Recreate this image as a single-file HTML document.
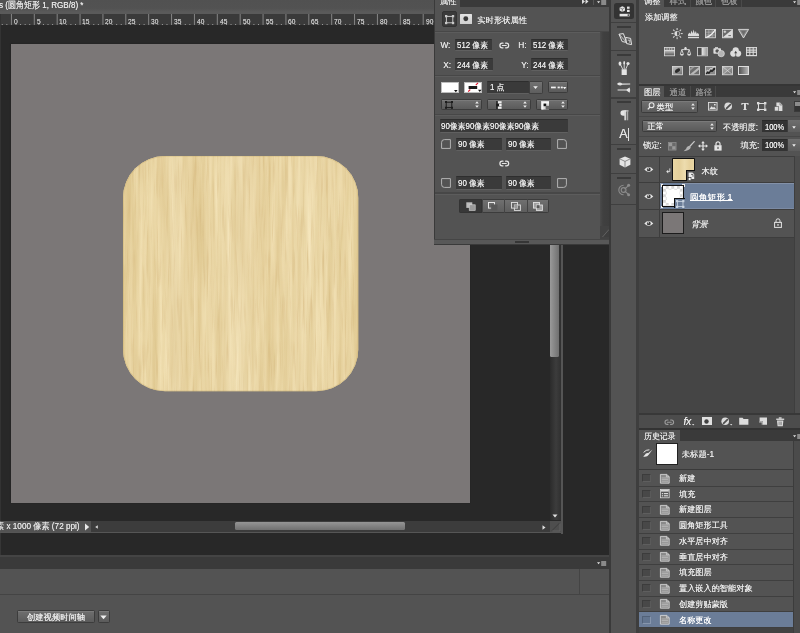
<!DOCTYPE html>
<html lang="zh-CN">
<head>
<meta charset="utf-8">
<title>未标题-1 (圆角矩形 1, RGB/8) *</title>
<style>
*{box-sizing:border-box;margin:0;padding:0}
html,body{width:800px;height:633px;overflow:hidden;background:#282828}
body{position:relative;font-family:"Liberation Sans","WenQuanYi Zen Hei","Noto Sans CJK SC",sans-serif;font-size:8.3px;color:#dedede;line-height:1}
#root{position:absolute;left:0;top:0;width:800px;height:633px;overflow:hidden;will-change:transform}
.a{position:absolute}
.t{position:absolute;white-space:nowrap;line-height:10px;height:10px;text-shadow:0 0 0.5px currentColor}
.fld{position:absolute;background:#3a3a3a;border-top:1px solid #2e2e2e;border-bottom:1px solid #606060;border-radius:1px}
.btn{position:absolute;background:linear-gradient(#6f6f6f,#5b5b5b);border:1px solid #3c3c3c;border-radius:1.5px;box-shadow:inset 0 0.6px 0 #858585}
svg{position:absolute;overflow:visible}
</style>
</head>
<body>
<div id="root">
<!-- document window -->
<div class="a" style="left:0px;top:0px;width:564px;height:13.5px;background:linear-gradient(#515151 0,#525252 60%,#5a5a5a 85%,#5a5a5a 100%)"></div>
<div class="t" style="left:-1px;top:-0.7px;font-size:8.4px;color:#e6e6e6;transform:scale(0.96,1.1);transform-origin:0 0;">s (圆角矩形 1, RGB/8) *</div>
<div class="a" style="left:0px;top:13.5px;width:564px;height:11.4px;background:#3a3a3a"></div>
<svg style="left:0px;top:13.5px;" width="440" height="11.7" viewBox="0 0 440 11.7"><rect x="1.54" y="10.2" width="1" height="1.5" fill="#b5b5b5"/><rect x="6.12" y="10.2" width="1" height="1.5" fill="#b5b5b5"/><rect x="10.70" y="0" width="1" height="11.7" fill="#858585"/><rect x="15.28" y="10.2" width="1" height="1.5" fill="#b5b5b5"/><rect x="19.86" y="10.2" width="1" height="1.5" fill="#b5b5b5"/><rect x="24.44" y="10.2" width="1" height="1.5" fill="#b5b5b5"/><rect x="29.02" y="10.2" width="1" height="1.5" fill="#b5b5b5"/><rect x="33.60" y="0" width="1" height="11.7" fill="#858585"/><rect x="38.18" y="10.2" width="1" height="1.5" fill="#b5b5b5"/><rect x="42.76" y="10.2" width="1" height="1.5" fill="#b5b5b5"/><rect x="47.34" y="10.2" width="1" height="1.5" fill="#b5b5b5"/><rect x="51.92" y="10.2" width="1" height="1.5" fill="#b5b5b5"/><rect x="56.50" y="0" width="1" height="11.7" fill="#858585"/><rect x="61.08" y="10.2" width="1" height="1.5" fill="#b5b5b5"/><rect x="65.66" y="10.2" width="1" height="1.5" fill="#b5b5b5"/><rect x="70.24" y="10.2" width="1" height="1.5" fill="#b5b5b5"/><rect x="74.82" y="10.2" width="1" height="1.5" fill="#b5b5b5"/><rect x="79.40" y="0" width="1" height="11.7" fill="#858585"/><rect x="83.98" y="10.2" width="1" height="1.5" fill="#b5b5b5"/><rect x="88.56" y="10.2" width="1" height="1.5" fill="#b5b5b5"/><rect x="93.14" y="10.2" width="1" height="1.5" fill="#b5b5b5"/><rect x="97.72" y="10.2" width="1" height="1.5" fill="#b5b5b5"/><rect x="102.30" y="0" width="1" height="11.7" fill="#858585"/><rect x="106.88" y="10.2" width="1" height="1.5" fill="#b5b5b5"/><rect x="111.46" y="10.2" width="1" height="1.5" fill="#b5b5b5"/><rect x="116.04" y="10.2" width="1" height="1.5" fill="#b5b5b5"/><rect x="120.62" y="10.2" width="1" height="1.5" fill="#b5b5b5"/><rect x="125.20" y="0" width="1" height="11.7" fill="#858585"/><rect x="129.78" y="10.2" width="1" height="1.5" fill="#b5b5b5"/><rect x="134.36" y="10.2" width="1" height="1.5" fill="#b5b5b5"/><rect x="138.94" y="10.2" width="1" height="1.5" fill="#b5b5b5"/><rect x="143.52" y="10.2" width="1" height="1.5" fill="#b5b5b5"/><rect x="148.10" y="0" width="1" height="11.7" fill="#858585"/><rect x="152.68" y="10.2" width="1" height="1.5" fill="#b5b5b5"/><rect x="157.26" y="10.2" width="1" height="1.5" fill="#b5b5b5"/><rect x="161.84" y="10.2" width="1" height="1.5" fill="#b5b5b5"/><rect x="166.42" y="10.2" width="1" height="1.5" fill="#b5b5b5"/><rect x="171.00" y="0" width="1" height="11.7" fill="#858585"/><rect x="175.58" y="10.2" width="1" height="1.5" fill="#b5b5b5"/><rect x="180.16" y="10.2" width="1" height="1.5" fill="#b5b5b5"/><rect x="184.74" y="10.2" width="1" height="1.5" fill="#b5b5b5"/><rect x="189.32" y="10.2" width="1" height="1.5" fill="#b5b5b5"/><rect x="193.90" y="0" width="1" height="11.7" fill="#858585"/><rect x="198.48" y="10.2" width="1" height="1.5" fill="#b5b5b5"/><rect x="203.06" y="10.2" width="1" height="1.5" fill="#b5b5b5"/><rect x="207.64" y="10.2" width="1" height="1.5" fill="#b5b5b5"/><rect x="212.22" y="10.2" width="1" height="1.5" fill="#b5b5b5"/><rect x="216.80" y="0" width="1" height="11.7" fill="#858585"/><rect x="221.38" y="10.2" width="1" height="1.5" fill="#b5b5b5"/><rect x="225.96" y="10.2" width="1" height="1.5" fill="#b5b5b5"/><rect x="230.54" y="10.2" width="1" height="1.5" fill="#b5b5b5"/><rect x="235.12" y="10.2" width="1" height="1.5" fill="#b5b5b5"/><rect x="239.70" y="0" width="1" height="11.7" fill="#858585"/><rect x="244.28" y="10.2" width="1" height="1.5" fill="#b5b5b5"/><rect x="248.86" y="10.2" width="1" height="1.5" fill="#b5b5b5"/><rect x="253.44" y="10.2" width="1" height="1.5" fill="#b5b5b5"/><rect x="258.02" y="10.2" width="1" height="1.5" fill="#b5b5b5"/><rect x="262.60" y="0" width="1" height="11.7" fill="#858585"/><rect x="267.18" y="10.2" width="1" height="1.5" fill="#b5b5b5"/><rect x="271.76" y="10.2" width="1" height="1.5" fill="#b5b5b5"/><rect x="276.34" y="10.2" width="1" height="1.5" fill="#b5b5b5"/><rect x="280.92" y="10.2" width="1" height="1.5" fill="#b5b5b5"/><rect x="285.50" y="0" width="1" height="11.7" fill="#858585"/><rect x="290.08" y="10.2" width="1" height="1.5" fill="#b5b5b5"/><rect x="294.66" y="10.2" width="1" height="1.5" fill="#b5b5b5"/><rect x="299.24" y="10.2" width="1" height="1.5" fill="#b5b5b5"/><rect x="303.82" y="10.2" width="1" height="1.5" fill="#b5b5b5"/><rect x="308.40" y="0" width="1" height="11.7" fill="#858585"/><rect x="312.98" y="10.2" width="1" height="1.5" fill="#b5b5b5"/><rect x="317.56" y="10.2" width="1" height="1.5" fill="#b5b5b5"/><rect x="322.14" y="10.2" width="1" height="1.5" fill="#b5b5b5"/><rect x="326.72" y="10.2" width="1" height="1.5" fill="#b5b5b5"/><rect x="331.30" y="0" width="1" height="11.7" fill="#858585"/><rect x="335.88" y="10.2" width="1" height="1.5" fill="#b5b5b5"/><rect x="340.46" y="10.2" width="1" height="1.5" fill="#b5b5b5"/><rect x="345.04" y="10.2" width="1" height="1.5" fill="#b5b5b5"/><rect x="349.62" y="10.2" width="1" height="1.5" fill="#b5b5b5"/><rect x="354.20" y="0" width="1" height="11.7" fill="#858585"/><rect x="358.78" y="10.2" width="1" height="1.5" fill="#b5b5b5"/><rect x="363.36" y="10.2" width="1" height="1.5" fill="#b5b5b5"/><rect x="367.94" y="10.2" width="1" height="1.5" fill="#b5b5b5"/><rect x="372.52" y="10.2" width="1" height="1.5" fill="#b5b5b5"/><rect x="377.10" y="0" width="1" height="11.7" fill="#858585"/><rect x="381.68" y="10.2" width="1" height="1.5" fill="#b5b5b5"/><rect x="386.26" y="10.2" width="1" height="1.5" fill="#b5b5b5"/><rect x="390.84" y="10.2" width="1" height="1.5" fill="#b5b5b5"/><rect x="395.42" y="10.2" width="1" height="1.5" fill="#b5b5b5"/><rect x="400.00" y="0" width="1" height="11.7" fill="#858585"/><rect x="404.58" y="10.2" width="1" height="1.5" fill="#b5b5b5"/><rect x="409.16" y="10.2" width="1" height="1.5" fill="#b5b5b5"/><rect x="413.74" y="10.2" width="1" height="1.5" fill="#b5b5b5"/><rect x="418.32" y="10.2" width="1" height="1.5" fill="#b5b5b5"/><rect x="422.90" y="0" width="1" height="11.7" fill="#858585"/><rect x="427.48" y="10.2" width="1" height="1.5" fill="#b5b5b5"/><rect x="432.06" y="10.2" width="1" height="1.5" fill="#b5b5b5"/></svg>
<div class="t" style="left:13.6px;top:17.9px;font-size:7.4px;color:#c8c8c8;transform:scale(0.9,1);transform-origin:0 0;line-height:8px;height:8px;">0</div>
<div class="t" style="left:36.5px;top:17.9px;font-size:7.4px;color:#c8c8c8;transform:scale(0.9,1);transform-origin:0 0;line-height:8px;height:8px;">5</div>
<div class="t" style="left:59.4px;top:17.9px;font-size:7.4px;color:#c8c8c8;transform:scale(0.9,1);transform-origin:0 0;line-height:8px;height:8px;">10</div>
<div class="t" style="left:82.3px;top:17.9px;font-size:7.4px;color:#c8c8c8;transform:scale(0.9,1);transform-origin:0 0;line-height:8px;height:8px;">15</div>
<div class="t" style="left:105.2px;top:17.9px;font-size:7.4px;color:#c8c8c8;transform:scale(0.9,1);transform-origin:0 0;line-height:8px;height:8px;">20</div>
<div class="t" style="left:128.1px;top:17.9px;font-size:7.4px;color:#c8c8c8;transform:scale(0.9,1);transform-origin:0 0;line-height:8px;height:8px;">25</div>
<div class="t" style="left:151.0px;top:17.9px;font-size:7.4px;color:#c8c8c8;transform:scale(0.9,1);transform-origin:0 0;line-height:8px;height:8px;">30</div>
<div class="t" style="left:173.9px;top:17.9px;font-size:7.4px;color:#c8c8c8;transform:scale(0.9,1);transform-origin:0 0;line-height:8px;height:8px;">35</div>
<div class="t" style="left:196.8px;top:17.9px;font-size:7.4px;color:#c8c8c8;transform:scale(0.9,1);transform-origin:0 0;line-height:8px;height:8px;">40</div>
<div class="t" style="left:219.7px;top:17.9px;font-size:7.4px;color:#c8c8c8;transform:scale(0.9,1);transform-origin:0 0;line-height:8px;height:8px;">45</div>
<div class="t" style="left:242.6px;top:17.9px;font-size:7.4px;color:#c8c8c8;transform:scale(0.9,1);transform-origin:0 0;line-height:8px;height:8px;">50</div>
<div class="t" style="left:265.5px;top:17.9px;font-size:7.4px;color:#c8c8c8;transform:scale(0.9,1);transform-origin:0 0;line-height:8px;height:8px;">55</div>
<div class="t" style="left:288.4px;top:17.9px;font-size:7.4px;color:#c8c8c8;transform:scale(0.9,1);transform-origin:0 0;line-height:8px;height:8px;">60</div>
<div class="t" style="left:311.3px;top:17.9px;font-size:7.4px;color:#c8c8c8;transform:scale(0.9,1);transform-origin:0 0;line-height:8px;height:8px;">65</div>
<div class="t" style="left:334.2px;top:17.9px;font-size:7.4px;color:#c8c8c8;transform:scale(0.9,1);transform-origin:0 0;line-height:8px;height:8px;">70</div>
<div class="t" style="left:357.1px;top:17.9px;font-size:7.4px;color:#c8c8c8;transform:scale(0.9,1);transform-origin:0 0;line-height:8px;height:8px;">75</div>
<div class="t" style="left:380.0px;top:17.9px;font-size:7.4px;color:#c8c8c8;transform:scale(0.9,1);transform-origin:0 0;line-height:8px;height:8px;">80</div>
<div class="t" style="left:402.9px;top:17.9px;font-size:7.4px;color:#c8c8c8;transform:scale(0.9,1);transform-origin:0 0;line-height:8px;height:8px;">85</div>
<div class="t" style="left:425.8px;top:17.9px;font-size:7.4px;color:#c8c8c8;transform:scale(0.9,1);transform-origin:0 0;line-height:8px;height:8px;">90</div>
<div class="a" style="left:0px;top:25.2px;width:550px;height:495.3px;background:#282828"></div>
<div class="a" style="left:0px;top:13.5px;width:1.2px;height:507px;background:#333"></div>
<div class="a" style="left:0px;top:532px;width:1.2px;height:23.5px;background:#363636"></div>
<div class="a" style="left:10.9px;top:44.4px;width:459.1px;height:458.3px;background:#7b7777;box-shadow:0 0 1.2px 0.3px #1c1c1c"></div>
<svg style="left:122.7px;top:155.9px" width="235.3" height="235.3" viewBox="0 0 235.3 235.3"><defs><filter id="grain" x="0" y="0" width="100%" height="100%" color-interpolation-filters="sRGB"><feTurbulence type="fractalNoise" baseFrequency="0.2 0.008" numOctaves="3" seed="11" result="n1"/><feColorMatrix in="n1" type="matrix" values="0.12 0 0 0 0.858  0.16 0 0 0 0.762  0.23 0 0 0 0.535  0 0 0 0 1" result="c1"/><feTurbulence type="fractalNoise" baseFrequency="0.035 0.003" numOctaves="2" seed="3" result="n2"/><feColorMatrix in="n2" type="matrix" values="0 0 0 0 0.84  0 0 0 0 0.73  0 0 0 0 0.50  0.7 0 0 0 -0.26" result="c2"/><feTurbulence type="fractalNoise" baseFrequency="0.5 0.022" numOctaves="2" seed="23" result="n3"/><feColorMatrix in="n3" type="matrix" values="0 0 0 0 0.76  0 0 0 0 0.61  0 0 0 0 0.36  0.9 0 0 0 -0.49" result="c3"/><feMerge><feMergeNode in="c1"/><feMergeNode in="c2"/><feMergeNode in="c3"/></feMerge></filter><linearGradient id="wg" x1="0" x2="1" y1="0" y2="0"><stop offset="0" stop-color="#c7a862" stop-opacity="0.30"/><stop offset="0.03" stop-color="#d8bd7c" stop-opacity="0.10"/><stop offset="0.16" stop-color="#e0c78a" stop-opacity="0.06"/><stop offset="0.22" stop-color="#fff6dc" stop-opacity="0.20"/><stop offset="0.30" stop-color="#dcc284" stop-opacity="0.06"/><stop offset="0.50" stop-color="#fff6dc" stop-opacity="0.16"/><stop offset="0.62" stop-color="#d9be80" stop-opacity="0.08"/><stop offset="0.78" stop-color="#fff6dc" stop-opacity="0.08"/><stop offset="0.97" stop-color="#d8bd7c" stop-opacity="0.08"/><stop offset="1" stop-color="#c7a862" stop-opacity="0.25"/></linearGradient><clipPath id="wc"><rect x="0" y="0" width="235.3" height="235.3" rx="42" ry="42"/></clipPath></defs><g clip-path="url(#wc)"><rect x="0" y="0" width="235.3" height="235.3" fill="#e9d6a5"/><rect x="0" y="0" width="235.3" height="235.3" filter="url(#grain)"/><rect x="0" y="0" width="235.3" height="235.3" fill="url(#wg)"/></g><rect x="0.4" y="0.4" width="234.5" height="234.5" rx="41.7" ry="41.7" fill="none" stroke="#b89a55" stroke-opacity="0.3" stroke-width="0.8"/></svg>
<div class="a" style="left:549.5px;top:25.2px;width:11.5px;height:495.3px;background:linear-gradient(90deg,#2b2b2b,#3c3c3c 55%,#303030)"></div>
<div class="a" style="left:550.2px;top:40px;width:9.1px;height:317px;border-radius:1.5px;background:linear-gradient(90deg,#9a9a9a,#707070)"></div>
<svg style="left:552px;top:513.5px;" width="6" height="4" viewBox="0 0 6 4"><path d="M0.5 0.5h5l-2.5 3z" fill="#e0e0e0"/></svg>
<div class="a" style="left:561px;top:13.5px;width:1.9px;height:520.3px;background:#555"></div>
<div class="a" style="left:0px;top:520.5px;width:561px;height:11.8px;background:#3c3c3c"></div>
<div class="a" style="left:0px;top:520.5px;width:90.5px;height:11.8px;background:#535353"></div>
<div class="t" style="left:-3.8px;top:520.5px;font-size:8.3px;color:#e0e0e0;transform:scale(0.985,1.05);transform-origin:0 0;">素 x 1000 像素 (72 ppi)</div>
<svg style="left:83.5px;top:522.8px;" width="6" height="8" viewBox="0 0 6 8"><path d="M1 0.5v7l4.2-3.5z" fill="#e8e8e8"/></svg>
<svg style="left:94.5px;top:524.5px;" width="3" height="4" viewBox="0 0 3 4"><path d="M2.8 0.2v3.6l-2.6-1.8z" fill="#d8d8d8"/></svg>
<svg style="left:541.5px;top:524.5px;" width="4" height="5" viewBox="0 0 4 5"><path d="M0.5 0.2v4.6l3-2.3z" fill="#e0e0e0"/></svg>
<div class="a" style="left:234.8px;top:521.5px;width:170px;height:8.8px;border-radius:1.5px;background:linear-gradient(#959595,#707070)"></div>
<div class="a" style="left:549.5px;top:521px;width:11px;height:11px;background:#4e4e4e"></div>
<svg style="left:549.5px;top:521px;" width="11" height="11" viewBox="0 0 11 11"><path d="M2 9.6L9.6 2" stroke="#3a3a3a" stroke-width="0.9"/><path d="M2.4 10H10V2.4" stroke="#6a6a6a" stroke-width="0.7" fill="none"/></svg>
<div class="a" style="left:0px;top:532px;width:562.9px;height:1.4px;background:#565656"></div>
<!-- timeline panel -->
<div class="a" style="left:0px;top:555.5px;width:609.4px;height:77.5px;background:#535353"></div>
<div class="a" style="left:0px;top:555.3px;width:609.4px;height:12.4px;background:linear-gradient(#444 0,#444 16%,#3a3a3a 17%,#3a3a3a 100%)"></div>
<div class="a" style="left:0px;top:567.5px;width:610px;height:1px;background:#3a3a3a"></div>
<div class="a" style="left:0px;top:594px;width:610px;height:1px;background:#444"></div>
<div class="a" style="left:579px;top:568.5px;width:1px;height:25.5px;background:#444"></div>
<svg style="left:597px;top:561px;" width="9.2" height="5" viewBox="0 0 9.2 5"><path d="M0 1.2h3.2l-1.6 2z" fill="#e0e0e0"/><rect x="4.2" y="0" width="5" height="5" fill="#8a8a8a"/></svg>
<div class="btn" style="left:17.1px;top:610.3px;width:78.3px;height:12.6px;"></div>
<div class="t" style="left:27px;top:612px;font-size:8.3px;color:#ececec;">创建视频时间轴</div>
<div class="btn" style="left:97.5px;top:610.3px;width:12.2px;height:12.6px;"></div>
<svg style="left:100.2px;top:614.5px;" width="7" height="5" viewBox="0 0 7 5"><path d="M0.3 0.5h6.4l-3.2 3.8z" fill="#f0f0f0"/></svg>
<!-- properties panel -->
<div class="a" style="left:433.5px;top:0px;width:176.5px;height:244.5px;background:#535353"></div>
<div class="a" style="left:433.5px;top:0px;width:1.2px;height:244.5px;background:#3a3a3a"></div>
<div class="a" style="left:433.5px;top:239.4px;width:176.5px;height:5.4px;background:#585858;border-top:1px solid #454545;border-bottom:0.8px solid #3a3a3a"></div>
<div class="a" style="left:514.6px;top:241.2px;width:14.4px;height:1.9px;background:#363636"></div>
<div class="a" style="left:460px;top:0px;width:150px;height:6.8px;background:#3a3a3a"></div>
<div class="t" style="left:440px;top:-3.6px;font-size:8.3px;color:#e6e6e6;">属性</div>
<svg style="left:582px;top:0px;" width="7" height="5" viewBox="0 0 7 5"><path d="M0 -1l3 2.5l-3 2.5zM3.5 -1l3 2.5l-3 2.5z" fill="#ddd"/></svg>
<div class="a" style="left:593px;top:0px;width:1px;height:5px;background:#555"></div>
<svg style="left:597px;top:0px;" width="9.2" height="5" viewBox="0 0 9.2 5"><path d="M0 1.2h3.2l-1.6 2z" fill="#e0e0e0"/><rect x="4.2" y="0" width="5" height="5" fill="#8a8a8a"/></svg>
<div class="a" style="left:599.6px;top:31.8px;width:10.4px;height:207.6px;background:#424242"></div>
<div class="a" style="left:599.6px;top:31.8px;width:10.4px;height:194px;background:linear-gradient(90deg,#4b4b4b,#404040 30%,#3d3d3d)"></div>
<svg style="left:602px;top:229px;" width="7" height="8" viewBox="0 0 7 8"><path d="M7 1L1 8h6z" fill="#3e3e3e"/><path d="M7 0.5L0.5 8" stroke="#6a6a6a" stroke-width="0.8"/></svg>
<div class="a" style="left:441.8px;top:11.3px;width:15.3px;height:15.8px;background:#3a3a3a;border-radius:2px;border:1px solid #333"></div>
<svg style="left:444.9px;top:14.8px;" width="9.2" height="9.2" viewBox="0 0 9.2 9.2"><rect x="1.4" y="1.4" width="6.4" height="6.4" fill="none" stroke="#c8c8c8" stroke-width="1"/><rect x="0" y="0" width="2.3" height="2.3" fill="#c8c8c8"/><rect x="6.9" y="0" width="2.3" height="2.3" fill="#c8c8c8"/><rect x="0" y="6.9" width="2.3" height="2.3" fill="#c8c8c8"/><rect x="6.9" y="6.9" width="2.3" height="2.3" fill="#c8c8c8"/></svg>
<div class="a" style="left:459.8px;top:13.8px;width:12.2px;height:10px;background:linear-gradient(#e4e4e4,#cfcfcf);border-radius:0.5px"></div>
<svg style="left:463px;top:16px;" width="6" height="6" viewBox="0 0 6 6"><circle cx="2.8" cy="2.8" r="2.45" fill="#3a3a3a"/></svg>
<div class="t" style="left:477.3px;top:15.2px;font-size:8.3px;color:#e6e6e6;">实时形状属性</div>
<div class="a" style="left:434.5px;top:30.599999999999998px;width:165px;height:1.2px;background:#474747"></div>
<div class="a" style="left:434.5px;top:31.8px;width:165px;height:0.8px;background:#5c5c5c"></div>
<div class="a" style="left:434.5px;top:30.6px;width:175.5px;height:1.2px;background:#474747"></div>
<div class="t" style="left:440.4px;top:40.2px;font-size:8.3px;color:#e2e2e2;">W:</div>
<div class="fld" style="left:455px;top:38.8px;width:37.3px;height:12.6px;"></div>
<div class="t" style="left:457.0px;top:40.39999999999999px;font-size:8.3px;color:#e8e8e8;transform:scale(0.95,1);transform-origin:0 0;">512 像素</div>
<div class="t" style="left:518.2px;top:40.2px;font-size:8.3px;color:#e2e2e2;">H:</div>
<div class="fld" style="left:530.6px;top:38.8px;width:37.2px;height:12.6px;"></div>
<div class="t" style="left:532.6px;top:40.39999999999999px;font-size:8.3px;color:#e8e8e8;transform:scale(0.95,1);transform-origin:0 0;">512 像素</div>
<div class="t" style="left:443.3px;top:60px;font-size:8.3px;color:#e2e2e2;">X:</div>
<div class="fld" style="left:455px;top:58.2px;width:37.5px;height:13.2px;"></div>
<div class="t" style="left:457.0px;top:60.1px;font-size:8.3px;color:#e8e8e8;transform:scale(0.95,1);transform-origin:0 0;">244 像素</div>
<div class="t" style="left:521.3px;top:60px;font-size:8.3px;color:#e2e2e2;">Y:</div>
<div class="fld" style="left:530.6px;top:58.2px;width:37.2px;height:13.2px;"></div>
<div class="t" style="left:532.6px;top:60.1px;font-size:8.3px;color:#e8e8e8;transform:scale(0.95,1);transform-origin:0 0;">244 像素</div>
<svg style="left:498.8px;top:41.6px;" width="10.6" height="7" viewBox="0 0 10.6 7"><path d="M4 1.2H3.2a2.3 2.3 0 0 0 0 4.6H4M6.6 1.2h0.8a2.3 2.3 0 0 1 0 4.6H6.6M3.4 3.5h3.8" fill="none" stroke="#e6e6e6" stroke-width="1.25" stroke-linecap="round"/></svg>
<div class="a" style="left:434.5px;top:75.0px;width:165px;height:1.2px;background:#474747"></div>
<div class="a" style="left:434.5px;top:76.19999999999999px;width:165px;height:0.8px;background:#5c5c5c"></div>
<div class="a" style="left:440.6px;top:82px;width:18px;height:10.8px;background:#fff;border:0.6px solid #bdbdbd"></div>
<svg style="left:454px;top:89.5px;" width="4" height="3" viewBox="0 0 4 3"><path d="M0 0h3.6l-1.8 2.2z" fill="#111"/></svg>
<div class="a" style="left:463.8px;top:82px;width:18.2px;height:10.8px;background:#fff;border:0.6px solid #bdbdbd"></div>
<svg style="left:463.8px;top:82px;" width="18.2" height="10.8" viewBox="0 0 18.2 10.8"><rect x="4.6" y="4" width="8.6" height="3" fill="#1a1a1a"/><path d="M11.8 3.2L14 0.9M4.2 9.6L6.3 7.5" stroke="#e0142a" stroke-width="1.1"/><path d="M14 7.8h3.6l-1.8 2.2z" fill="#111"/></svg>
<div class="fld" style="left:487px;top:80.6px;width:42px;height:13px;"></div>
<div class="t" style="left:489.59999999999997px;top:82.39999999999999px;font-size:8.3px;color:#e8e8e8;transform:scale(0.95,1);transform-origin:0 0;">1 点</div>
<div class="a" style="left:528.8px;top:80.6px;width:13.8px;height:13px;background:linear-gradient(#727272,#5e5e5e);border:1px solid #3f3f3f;border-radius:0 1.5px 1.5px 0"></div>
<svg style="left:533.2px;top:86.2px;" width="5" height="3.5" viewBox="0 0 5 3.5"><path d="M0.2 0.3h4.6l-2.3 2.8z" fill="#eee"/></svg>
<div class="btn" style="left:547.5px;top:81.2px;width:20.5px;height:11.8px;"></div>
<svg style="left:550.5px;top:86.2px;" width="16" height="5" viewBox="0 0 16 5"><rect x="0" y="0.6" width="4.8" height="1.7" fill="#f2f2f2"/><rect x="6.6" y="0.6" width="2.2" height="1.7" fill="#f2f2f2"/><rect x="9.8" y="0.6" width="2" height="1.7" fill="#f2f2f2"/><path d="M12 1h3.4l-1.7 2.2z" fill="#f2f2f2"/></svg>
<div class="btn" style="left:440.6px;top:98.8px;width:41.4px;height:11.6px;"></div>
<svg style="left:474.8px;top:101.1px;" width="4" height="7" viewBox="0 0 4 7"><path d="M0.2 2.6h3.6l-1.8-2.3zM0.2 4.4h3.6l-1.8 2.3z" fill="#ececec"/></svg>
<div class="btn" style="left:487px;top:98.8px;width:43.6px;height:11.6px;"></div>
<svg style="left:523.4px;top:101.1px;" width="4" height="7" viewBox="0 0 4 7"><path d="M0.2 2.6h3.6l-1.8-2.3zM0.2 4.4h3.6l-1.8 2.3z" fill="#ececec"/></svg>
<div class="btn" style="left:535.6px;top:98.8px;width:32.4px;height:11.6px;"></div>
<svg style="left:560.8px;top:101.1px;" width="4" height="7" viewBox="0 0 4 7"><path d="M0.2 2.6h3.6l-1.8-2.3zM0.2 4.4h3.6l-1.8 2.3z" fill="#ececec"/></svg>
<svg style="left:445.2px;top:101px;" width="8" height="7.8" viewBox="0 0 8 7.8"><rect x="1.2" y="1.2" width="5.6" height="5.4" fill="none" stroke="#1c1c1c" stroke-width="1"/><rect x="0" y="0" width="2" height="2" fill="#1c1c1c"/><rect x="6" y="0" width="2" height="2" fill="#1c1c1c"/><rect x="0" y="5.8" width="2" height="2" fill="#1c1c1c"/><rect x="6" y="5.8" width="2" height="2" fill="#1c1c1c"/></svg>
<svg style="left:495.6px;top:100.8px;" width="6" height="9" viewBox="0 0 6 9"><rect x="1.8" y="0.2" width="3.8" height="2.2" fill="#f0f0f0"/><rect x="1.8" y="2.9" width="3.8" height="2.2" fill="#f0f0f0"/><rect x="1.8" y="5.6" width="3.8" height="2.2" fill="#f0f0f0"/><rect x="0.3" y="0" width="1.3" height="8" fill="#1a1a1a"/><rect x="0.3" y="2.8" width="2.8" height="2.4" fill="#1a1a1a"/></svg>
<svg style="left:541.4px;top:100.8px;" width="8" height="9" viewBox="0 0 8 9"><rect x="0" y="0" width="8" height="8.6" fill="#d8d8d8"/><path d="M1.6 8.6V1.6H8" fill="none" stroke="#f6f6f6" stroke-width="1.6"/><rect x="2.6" y="2.6" width="2.6" height="2.6" fill="#111"/><rect x="4.6" y="4.8" width="3.4" height="3.8" fill="#666"/></svg>
<div class="a" style="left:434.5px;top:113.80000000000001px;width:165px;height:1.2px;background:#474747"></div>
<div class="a" style="left:434.5px;top:115.0px;width:165px;height:0.8px;background:#5c5c5c"></div>
<div class="fld" style="left:440px;top:119.4px;width:128px;height:13.2px;"></div>
<div class="t" style="left:441.0px;top:121.3px;font-size:8.3px;color:#e8e8e8;transform:scale(0.95,1);transform-origin:0 0;">90像素90像素90像素90像素</div>
<svg style="left:441px;top:138.8px;" width="10" height="10" viewBox="0 0 10 10"><path d="M0.6 9.4V3.4A2.8 2.8 0 0 1 3.4 0.6H9.4V9.4Z" fill="none" stroke="#bdbdbd" stroke-width="0.9"/></svg>
<svg style="left:556.6px;top:138.8px;" width="10" height="10" viewBox="0 0 10 10"><path d="M0.6 9.4V0.6H6.6A2.8 2.8 0 0 1 9.4 3.4V9.4Z" fill="none" stroke="#bdbdbd" stroke-width="0.9"/></svg>
<div class="fld" style="left:456px;top:137.5px;width:46px;height:13.2px;"></div>
<div class="t" style="left:458.0px;top:139.4px;font-size:8.3px;color:#e8e8e8;transform:scale(0.95,1);transform-origin:0 0;">90 像素</div>
<div class="fld" style="left:506.2px;top:137.5px;width:45px;height:13.2px;"></div>
<div class="t" style="left:508.2px;top:139.4px;font-size:8.3px;color:#e8e8e8;transform:scale(0.95,1);transform-origin:0 0;">90 像素</div>
<svg style="left:498.8px;top:159.6px;" width="10.6" height="7" viewBox="0 0 10.6 7"><path d="M4 1.2H3.2a2.3 2.3 0 0 0 0 4.6H4M6.6 1.2h0.8a2.3 2.3 0 0 1 0 4.6H6.6M3.4 3.5h3.8" fill="none" stroke="#e6e6e6" stroke-width="1.25" stroke-linecap="round"/></svg>
<svg style="left:441px;top:178px;" width="10" height="10" viewBox="0 0 10 10"><path d="M0.6 0.6V6.6A2.8 2.8 0 0 0 3.4 9.4H9.4V0.6Z" fill="none" stroke="#bdbdbd" stroke-width="0.9"/></svg>
<svg style="left:556.6px;top:178px;" width="10" height="10" viewBox="0 0 10 10"><path d="M0.6 0.6H9.4V6.6A2.8 2.8 0 0 1 6.6 9.4H0.6Z" fill="none" stroke="#bdbdbd" stroke-width="0.9"/></svg>
<div class="fld" style="left:456px;top:176.4px;width:46px;height:13.4px;"></div>
<div class="t" style="left:458.0px;top:178.4px;font-size:8.3px;color:#e8e8e8;transform:scale(0.95,1);transform-origin:0 0;">90 像素</div>
<div class="fld" style="left:506.2px;top:176.4px;width:45px;height:13.4px;"></div>
<div class="t" style="left:508.2px;top:178.4px;font-size:8.3px;color:#e8e8e8;transform:scale(0.95,1);transform-origin:0 0;">90 像素</div>
<div class="a" style="left:434.5px;top:192.4px;width:165px;height:1.2px;background:#474747"></div>
<div class="a" style="left:434.5px;top:193.6px;width:165px;height:0.8px;background:#5c5c5c"></div>
<div class="a" style="left:458.6px;top:198.5px;width:90.8px;height:14.9px;background:linear-gradient(#707070,#5d5d5d);border:1px solid #3c3c3c;border-radius:1.5px"></div>
<div class="a" style="left:458.6px;top:198.5px;width:23.2px;height:14.9px;background:#383838;border:1px solid #333;border-radius:1.5px 0 0 1.5px"></div>
<div class="a" style="left:481.8px;top:199.4px;width:1px;height:13.2px;background:#444"></div>
<div class="a" style="left:504.4px;top:199.4px;width:1px;height:13.2px;background:#444"></div>
<div class="a" style="left:527px;top:199.4px;width:1px;height:13.2px;background:#444"></div>
<svg style="left:465.6px;top:201.8px;" width="10" height="9" viewBox="0 0 10 9"><rect x="0.3" y="0.3" width="6" height="5.6" fill="#bdbdbd"/><rect x="3.2" y="2.8" width="6" height="5.6" fill="#9a9a9a" stroke="#d6d6d6" stroke-width="0.6"/></svg>
<svg style="left:488.2px;top:201.8px;" width="10" height="9" viewBox="0 0 10 9"><rect x="0.5" y="0.5" width="6" height="5.6" fill="none" stroke="#e6e6e6" stroke-width="1"/><rect x="3.2" y="2.8" width="6" height="5.6" fill="#585858" stroke="#5c5c5c" stroke-width="0.6"/></svg>
<svg style="left:510.8px;top:201.8px;" width="10" height="9" viewBox="0 0 10 9"><rect x="0.5" y="0.5" width="6" height="5.6" fill="none" stroke="#e0e0e0" stroke-width="0.9"/><rect x="3.4" y="3" width="6" height="5.4" fill="none" stroke="#e0e0e0" stroke-width="0.9"/><rect x="3.4" y="3" width="3.1" height="3.1" fill="#9a9a9a"/></svg>
<svg style="left:533.3px;top:201.8px;" width="10" height="9" viewBox="0 0 10 9"><rect x="0.5" y="0.5" width="6" height="5.6" fill="#a0a0a0" stroke="#e0e0e0" stroke-width="0.9"/><rect x="3.4" y="3" width="6" height="5.4" fill="#a0a0a0" stroke="#e0e0e0" stroke-width="0.9"/><rect x="3.6" y="3.2" width="2.8" height="2.8" fill="#585858"/></svg>
<!-- icon dock -->
<div class="a" style="left:610.8px;top:0px;width:25.5px;height:633px;background:#535353"></div>
<div class="a" style="left:609.4px;top:0px;width:1.5px;height:633px;background:#3a3a3a"></div>
<div class="a" style="left:636.2px;top:0px;width:2.6px;height:633px;background:#3e3e3e"></div>
<div class="a" style="left:613.8px;top:2.6px;width:20.4px;height:16.6px;background:#333;border-radius:2.5px"></div>
<div class="a" style="left:611.3px;top:21.599999999999998px;width:25px;height:1.3px;background:#3f3f3f"></div>
<div class="a" style="left:617.2px;top:25.5px;width:13.4px;height:2.1px;background:#3a3a3a"></div>
<div class="a" style="left:611.3px;top:49.6px;width:25px;height:1.3px;background:#3f3f3f"></div>
<div class="a" style="left:617.2px;top:53.5px;width:13.4px;height:2.1px;background:#3a3a3a"></div>
<div class="a" style="left:611.3px;top:97.4px;width:25px;height:1.3px;background:#3f3f3f"></div>
<div class="a" style="left:617.2px;top:101.1px;width:13.4px;height:2.1px;background:#3a3a3a"></div>
<div class="a" style="left:611.3px;top:144.0px;width:25px;height:1.3px;background:#3f3f3f"></div>
<div class="a" style="left:617.2px;top:148.1px;width:13.4px;height:2.1px;background:#3a3a3a"></div>
<div class="a" style="left:611.3px;top:172.8px;width:25px;height:1.3px;background:#3f3f3f"></div>
<div class="a" style="left:617.2px;top:176.7px;width:13.4px;height:2.1px;background:#3a3a3a"></div>
<div class="a" style="left:611.3px;top:204.20000000000002px;width:25px;height:1.3px;background:#3f3f3f"></div>
<svg style="left:618.5px;top:5.5px;" width="12" height="11" viewBox="0 0 12 11"><path d="M3.3 0.3L6 1.6V4.6L3.3 6L0.6 4.6V1.6Z" fill="#e4e4e4"/><path d="M0.6 1.6L3.3 3L6 1.6M3.3 3V6" stroke="#333" stroke-width="0.5" fill="none"/><rect x="8" y="0.6" width="2.6" height="2.2" fill="#e4e4e4"/><rect x="8" y="3.8" width="2.6" height="2.2" fill="#e4e4e4"/><rect x="0.6" y="7.8" width="10" height="2.6" fill="#e4e4e4"/><rect x="8.6" y="8.4" width="1.4" height="1.4" fill="#333"/></svg>
<svg style="left:617.5px;top:33px;" width="15" height="14" viewBox="0 0 15 14"><path d="M1 1.2L5.4 0.6L8.6 9.4L4.2 8.6Z" fill="none" stroke="#e4e4e4" stroke-width="1"/><path d="M1 1.2L8.6 9.4" stroke="#e4e4e4" stroke-width="0.8"/><path d="M7.6 4.4L12.6 5.4L13.6 11.6L8.6 10.6Z" fill="#535353" stroke="#e4e4e4" stroke-width="1"/><path d="M9.8 7.2h2v2.6" stroke="#e4e4e4" stroke-width="0.8" fill="none"/></svg>
<svg style="left:618px;top:60.6px;" width="12" height="15" viewBox="0 0 12 15"><rect x="3.6" y="8.2" width="5.2" height="5.8" fill="#e4e4e4"/><path d="M4.6 8L2.4 3.4M6.2 8V2M7.8 8L9.8 3.4" stroke="#e4e4e4" stroke-width="0.9"/><ellipse cx="2" cy="2.6" rx="1.4" ry="2.2" fill="#e4e4e4"/><ellipse cx="6.2" cy="1.8" rx="0.9" ry="1.8" fill="#e4e4e4"/><ellipse cx="10" cy="2.6" rx="1.6" ry="1.5" fill="#e4e4e4"/></svg>
<svg style="left:617.4px;top:81.5px;" width="14" height="12" viewBox="0 0 14 12"><path d="M0.4 1.2Q3 -0.4 5.2 1.6L13.2 1.6V2.6L5.2 2.8Q3 4.2 0.4 2.4Z" fill="#e4e4e4"/><path d="M0.6 7.4H9.4L12.6 5.6Q13.8 8 12.6 10.8L9.4 8.6H0.6Z" fill="#e4e4e4"/></svg>
<svg style="left:619.8px;top:109.7px;" width="9" height="10.4" viewBox="0 0 9 10.4"><path d="M4.6 0.3H8.4V1.5H4.6Z" fill="#e4e4e4"/><path d="M4.8 0.3V5.8H3.2A2.75 2.75 0 0 1 3.2 0.3Z" fill="#e4e4e4"/><rect x="4.4" y="0.3" width="1.5" height="10" fill="#e4e4e4"/><rect x="6.6" y="0.3" width="1.6" height="10" fill="#a8a8a8"/></svg>
<div class="t" style="left:619.2px;top:128.2px;font-size:12.6px;color:#e4e4e4;line-height:13px;height:13px;">A</div>
<div class="a" style="left:628.2px;top:127.6px;width:0.9px;height:13px;background:#e0e0e0"></div>
<svg style="left:618.6px;top:156.4px;" width="12" height="12" viewBox="0 0 12 12"><path d="M6 0.4L11.4 2.8V8.8L6 11.6L0.6 8.8V2.8Z" fill="#e4e4e4"/><path d="M0.8 2.9L6 5.4L11.2 2.9M6 5.4V11.4" stroke="#666" stroke-width="0.7" fill="none"/></svg>
<svg style="left:618px;top:183px;" width="13" height="14" viewBox="0 0 13 14"><circle cx="5.6" cy="7" r="2.4" fill="none" stroke="#8c8c8c" stroke-width="1.1"/><path d="M5.6 2.2A4.8 4.8 0 0 0 5.6 11.8" fill="none" stroke="#8c8c8c" stroke-width="1.1"/><path d="M6.6 6.2L10.4 2.6M6.6 7.8L10.4 11.4" stroke="#8c8c8c" stroke-width="1.1"/><circle cx="10.6" cy="2.2" r="1.5" fill="#8c8c8c"/><circle cx="10.6" cy="11.8" r="1.5" fill="#8c8c8c"/></svg>
<!-- right panels -->
<div class="a" style="left:639px;top:0px;width:161px;height:633px;background:#535353"></div>
<div class="a" style="left:639px;top:0px;width:161px;height:6.8px;background:#3a3a3a"></div>
<div class="a" style="left:639px;top:0px;width:25.2px;height:7px;background:#535353"></div>
<div class="t" style="left:644px;top:-3.6px;font-size:8.3px;color:#e6e6e6;">调整</div>
<div class="t" style="left:669.6px;top:-3.6px;font-size:8.3px;color:#969696;">样式</div>
<div class="t" style="left:695.4px;top:-3.6px;font-size:8.3px;color:#969696;">颜色</div>
<div class="t" style="left:721px;top:-3.6px;font-size:8.3px;color:#969696;">色板</div>
<div class="a" style="left:689.8px;top:0px;width:1px;height:6.8px;background:#4a4a4a"></div>
<div class="a" style="left:715.4px;top:0px;width:1px;height:6.8px;background:#4a4a4a"></div>
<div class="a" style="left:741px;top:0px;width:1px;height:6.8px;background:#4a4a4a"></div>
<svg style="left:793px;top:0px;" width="9.2" height="5" viewBox="0 0 9.2 5"><path d="M0 1.2h3.2l-1.6 2z" fill="#e0e0e0"/><rect x="4.2" y="0" width="5" height="5" fill="#8a8a8a"/></svg>
<div class="t" style="left:645px;top:12.2px;font-size:8.3px;color:#e6e6e6;transform:scale(0.98,1);transform-origin:0 0;">添加调整</div>
<svg style="left:670.9px;top:27.799999999999997px;" width="12.2" height="11.2" viewBox="0 0 12.2 11.2"><rect x="5.6" y="0" width="1" height="2" fill="#dcdcdc" transform="rotate(0 6.1 5.6)"/><rect x="5.6" y="0" width="1" height="2" fill="#dcdcdc" transform="rotate(45 6.1 5.6)"/><rect x="5.6" y="0" width="1" height="2" fill="#dcdcdc" transform="rotate(90 6.1 5.6)"/><rect x="5.6" y="0" width="1" height="2" fill="#dcdcdc" transform="rotate(135 6.1 5.6)"/><rect x="5.6" y="0" width="1" height="2" fill="#dcdcdc" transform="rotate(180 6.1 5.6)"/><rect x="5.6" y="0" width="1" height="2" fill="#dcdcdc" transform="rotate(225 6.1 5.6)"/><rect x="5.6" y="0" width="1" height="2" fill="#dcdcdc" transform="rotate(270 6.1 5.6)"/><rect x="5.6" y="0" width="1" height="2" fill="#dcdcdc" transform="rotate(315 6.1 5.6)"/><circle cx="6.1" cy="5.6" r="2.7" fill="#dcdcdc"/><path d="M6.1 3.4a2.2 2.2 0 0 1 0 4.4z" fill="#555"/></svg>
<svg style="left:688.2px;top:28.799999999999997px;" width="11" height="9.2" viewBox="0 0 11 9.2"><path d="M0 7V5.4L1.4 3.6L2.4 5L3.6 1.6L4.6 4.4L5.6 0.4L6.8 4.4L7.8 2L8.8 5L9.8 3.8L11 5.4V7Z" fill="#dcdcdc"/><rect x="0" y="7.8" width="11" height="1.4" fill="#dcdcdc"/></svg>
<svg style="left:704.9px;top:28.799999999999997px;" width="11" height="9.2" viewBox="0 0 11 9.2"><rect x="0.4" y="0.4" width="10.2" height="8.4" fill="#777" stroke="#dcdcdc" stroke-width="0.8"/><path d="M0.4 3.2H10.6M0.4 6H10.6M3.8 0.4V8.8M7.2 0.4V8.8" stroke="#c4c4c4" stroke-width="0.5"/><path d="M0.6 8.6Q6 7.4 10.4 0.6" stroke="#f4f4f4" stroke-width="1.1" fill="none"/></svg>
<svg style="left:721.6px;top:28.799999999999997px;" width="11" height="9.2" viewBox="0 0 11 9.2"><rect x="0.4" y="0.4" width="10.2" height="8.4" fill="#6a6a6a" stroke="#dcdcdc" stroke-width="0.8"/><path d="M0.6 8.6L10.4 0.6V8.6Z" fill="#dcdcdc"/><path d="M1.6 2.8H4.2M2.9 1.5V4.1" stroke="#f0f0f0" stroke-width="0.8"/><path d="M6.4 6.6H9" stroke="#555" stroke-width="0.8"/></svg>
<svg style="left:738.3px;top:28.799999999999997px;" width="11" height="9.4" viewBox="0 0 11 9.4"><path d="M0.4 0.4H10.6L5.5 9Z" fill="#8a8a8a" stroke="#dcdcdc" stroke-width="0.9"/><path d="M3 1.8H8L5.5 6Z" fill="#6c6c6c"/></svg>
<svg style="left:663.7px;top:47.4px;" width="11" height="9.2" viewBox="0 0 11 9.2"><defs><linearGradient id="gh" x1="0" y1="0" x2="0" y2="1"><stop offset="0" stop-color="#bdbdbd"/><stop offset="1" stop-color="#585858"/></linearGradient></defs><rect x="0" y="0" width="11" height="9.2" fill="#dcdcdc"/><rect x="0.8" y="0.8" width="9.4" height="2.2" fill="#777"/><path d="M3 0.8V3M5.4 0.8V3M7.8 0.8V3" stroke="#e0e0e0" stroke-width="0.6"/><rect x="0.8" y="3.8" width="9.4" height="4.6" fill="url(#gh)"/></svg>
<svg style="left:680.25px;top:47.4px;" width="11" height="9.6" viewBox="0 0 11 9.6"><path d="M5.5 0.2V3M1.8 2.6H9.2M1.8 2.6L0.4 7.2M1.8 2.6L3.4 7.2M9.2 2.6L7.6 7.2M9.2 2.6L10.6 7.2" stroke="#dcdcdc" stroke-width="0.9" fill="none"/><path d="M0.1 7H3.7A1.8 1.8 0 0 1 0.1 7ZM7.3 7H10.9A1.8 1.8 0 0 1 7.3 7Z" fill="#dcdcdc"/><circle cx="5.5" cy="1.2" r="1.2" fill="#dcdcdc"/></svg>
<svg style="left:696.8000000000001px;top:47.4px;" width="11" height="9.2" viewBox="0 0 11 9.2"><defs><linearGradient id="gb" x1="0" y1="0" x2="1" y2="0"><stop offset="0" stop-color="#e8e8e8"/><stop offset="1" stop-color="#9a9a9a"/></linearGradient></defs><rect x="0.4" y="0.4" width="10.2" height="8.4" fill="#4a4a4a" stroke="#dcdcdc" stroke-width="0.8"/><rect x="4.6" y="0.8" width="5.6" height="7.6" fill="url(#gb)"/></svg>
<svg style="left:713.35px;top:47.4px;" width="12" height="10.4" viewBox="0 0 12 10.4"><rect x="0.4" y="1.2" width="7.6" height="5.6" rx="0.8" fill="#dcdcdc"/><rect x="2" y="0.2" width="3" height="1.4" fill="#dcdcdc"/><circle cx="4.2" cy="4" r="1.8" fill="#555"/><circle cx="8.2" cy="6.6" r="3.2" fill="#b4b4b4" stroke="#dcdcdc" stroke-width="0.7"/></svg>
<svg style="left:729.9000000000001px;top:47.4px;" width="11.4" height="10" viewBox="0 0 11.4 10"><circle cx="5.7" cy="3.4" r="3.1" fill="#dcdcdc"/><circle cx="3.3" cy="6.6" r="3.1" fill="#dcdcdc"/><circle cx="8.1" cy="6.6" r="3.1" fill="#dcdcdc"/><path d="M5.7 3.8L4.2 6.2H7.2Z" fill="#444"/><path d="M5.7 5.6V9" stroke="#444" stroke-width="0.6"/></svg>
<svg style="left:746.45px;top:47.4px;" width="11" height="9.2" viewBox="0 0 11 9.2"><rect x="0" y="0" width="11" height="9.2" fill="#dcdcdc"/><rect x="0.9" y="0.9" width="2.4" height="1.8" fill="#777"/><rect x="4.3" y="0.9" width="2.4" height="1.8" fill="#777"/><rect x="7.7" y="0.9" width="2.4" height="1.8" fill="#777"/><rect x="0.9" y="3.5" width="2.4" height="1.8" fill="#8c8c8c"/><rect x="4.3" y="3.5" width="2.4" height="1.8" fill="#8c8c8c"/><rect x="7.7" y="3.5" width="2.4" height="1.8" fill="#8c8c8c"/><rect x="0.9" y="6.1" width="2.4" height="1.8" fill="#4a4a4a"/><rect x="4.3" y="6.1" width="2.4" height="1.8" fill="#4a4a4a"/><rect x="7.7" y="6.1" width="2.4" height="1.8" fill="#4a4a4a"/></svg>
<svg style="left:671.9px;top:66.2px;" width="11" height="9.2" viewBox="0 0 11 9.2"><defs><linearGradient id="gi" x1="0" y1="0" x2="1" y2="1"><stop offset="0" stop-color="#c4c4c4"/><stop offset="1" stop-color="#6e6e6e"/></linearGradient></defs><rect x="0.4" y="0.4" width="10.2" height="8.4" fill="url(#gi)" stroke="#dcdcdc" stroke-width="0.8"/><ellipse cx="5.5" cy="4.6" rx="3" ry="1.6" fill="#2c2c2c" transform="rotate(-35 5.5 4.6)"/></svg>
<svg style="left:688.5px;top:66.2px;" width="11" height="9.2" viewBox="0 0 11 9.2"><rect x="0.4" y="0.4" width="10.2" height="8.4" fill="#6c6c6c" stroke="#dcdcdc" stroke-width="0.8"/><path d="M0.8 8.4L10.2 0.8V3.6L4.2 8.4Z" fill="#b8b8b8"/><path d="M0.8 5L6 0.8H3.4L0.8 2.8Z" fill="#9a9a9a"/></svg>
<svg style="left:705.1px;top:66.2px;" width="11" height="9.2" viewBox="0 0 11 9.2"><rect x="0.4" y="0.4" width="10.2" height="8.4" fill="#8a8a8a" stroke="#dcdcdc" stroke-width="0.8"/><path d="M0.8 7.6L2.4 5.6L4 6.2L5.6 3.8L7.2 4.2L8.6 2L10.2 1.8V3.6L8.8 4.6L7.4 6L5.8 5.8L4.2 8L2.6 7.6L0.8 8.4Z" fill="#222"/><path d="M0.8 5.8L2.2 4.2L3.8 4.8L5.4 2.4L7 2.8L8.4 0.9H10" fill="none" stroke="#efefef" stroke-width="0.7"/></svg>
<svg style="left:721.6999999999999px;top:66.2px;" width="11" height="9.2" viewBox="0 0 11 9.2"><defs><linearGradient id="gs" x1="0" y1="0" x2="1" y2="1"><stop offset="0" stop-color="#b0b0b0"/><stop offset="1" stop-color="#707070"/></linearGradient></defs><rect x="0.4" y="0.4" width="10.2" height="8.4" fill="url(#gs)" stroke="#dcdcdc" stroke-width="0.8"/><path d="M0.8 0.8L10.2 8.4M10.2 0.8L0.8 8.4" stroke="#d8d8d8" stroke-width="0.7"/></svg>
<div class="a" style="left:738.3px;top:66.2px;width:11px;height:9.2px;border:0.8px solid #dcdcdc;background:linear-gradient(90deg,#555,#b4b4b4)"></div>
<div class="a" style="left:639px;top:83.6px;width:161px;height:2px;background:#353535"></div>
<div class="a" style="left:639px;top:85.6px;width:161px;height:11.6px;background:#3a3a3a"></div>
<div class="a" style="left:639px;top:85.6px;width:25.2px;height:11.8px;background:#535353"></div>
<div class="t" style="left:644px;top:86.8px;font-size:8.3px;color:#e6e6e6;">图层</div>
<div class="t" style="left:669.6px;top:86.8px;font-size:8.3px;color:#969696;">通道</div>
<div class="t" style="left:695.4px;top:86.8px;font-size:8.3px;color:#969696;">路径</div>
<div class="a" style="left:689.8px;top:85.6px;width:1px;height:11.6px;background:#4a4a4a"></div>
<div class="a" style="left:715.4px;top:85.6px;width:1px;height:11.6px;background:#4a4a4a"></div>
<svg style="left:792.6px;top:90px;" width="9.2" height="5" viewBox="0 0 9.2 5"><path d="M0 1.2h3.2l-1.6 2z" fill="#e0e0e0"/><rect x="4.2" y="0" width="5" height="5" fill="#8a8a8a"/></svg>
<div class="btn" style="left:641.4px;top:100.2px;width:56.2px;height:12.4px;"></div>
<svg style="left:647px;top:102.4px;" width="8" height="8" viewBox="0 0 8 8"><circle cx="4.6" cy="3.2" r="2.4" fill="none" stroke="#e8e8e8" stroke-width="1.1"/><path d="M3 5L0.8 7.4" stroke="#e8e8e8" stroke-width="1.3"/></svg>
<div class="t" style="left:656.6px;top:101.8px;font-size:8.3px;color:#ececec;">类型</div>
<svg style="left:691px;top:103.2px;" width="4" height="7" viewBox="0 0 4 7"><path d="M0.2 2.6h3.6l-1.8-2.3zM0.2 4.4h3.6l-1.8 2.3z" fill="#ececec"/></svg>
<svg style="left:707.6px;top:102.4px;" width="9.6" height="8.6" viewBox="0 0 9.6 8.6"><rect x="0.5" y="0.5" width="8.6" height="7.6" fill="#666" stroke="#dcdcdc" stroke-width="0.9"/><path d="M1.4 7L3.6 4.2L5 5.8L6.2 4.8L8 7Z" fill="#e4e4e4"/><rect x="6" y="2" width="1.6" height="1.4" fill="#e4e4e4"/></svg>
<svg style="left:724.4px;top:102.4px;" width="8.4" height="8.4" viewBox="0 0 8.4 8.4"><circle cx="4.2" cy="4.2" r="3.8" fill="#dadada"/><path d="M2.6 6.4L6.4 2.6" stroke="#4e4e4e" stroke-width="1.7" stroke-linecap="round"/></svg>
<div class="t" style="left:741.4px;top:100.6px;font-size:10.4px;color:#e0e0e0;font-family:'Liberation Serif',serif;font-weight:bold;line-height:12px;height:12px;">T</div>
<svg style="left:756.8px;top:102.2px;" width="9.4" height="9" viewBox="0 0 9.4 9"><rect x="1.5" y="1.5" width="6.4" height="6" fill="none" stroke="#dcdcdc" stroke-width="1"/><rect x="0" y="0" width="2.4" height="2.4" fill="#dcdcdc"/><rect x="7" y="0" width="2.4" height="2.4" fill="#dcdcdc"/><rect x="0" y="6.6" width="2.4" height="2.4" fill="#dcdcdc"/><rect x="7" y="6.6" width="2.4" height="2.4" fill="#dcdcdc"/></svg>
<svg style="left:773.6px;top:101.8px;" width="9" height="9.6" viewBox="0 0 9 9.6"><path d="M2.4 0.6H6L8.4 3V9H2.4Z" fill="#dcdcdc"/><path d="M6 0.6V3H8.4" fill="none" stroke="#666" stroke-width="0.6"/><rect x="0.4" y="4.6" width="4.2" height="4.4" fill="#dcdcdc" stroke="#555" stroke-width="0.6"/></svg>
<div class="a" style="left:793.8px;top:101px;width:6.2px;height:11px;background:linear-gradient(#8c8c8c 0 45%,#333 45% 100%);border:1px solid #3a3a3a;border-right:0"></div>
<div class="a" style="left:639px;top:116px;width:161px;height:1px;background:#474747"></div>
<div class="btn" style="left:641.6px;top:120px;width:75.4px;height:12.2px;"></div>
<div class="t" style="left:647.2px;top:121.2px;font-size:8.3px;color:#ececec;">正常</div>
<svg style="left:710.4px;top:122.6px;" width="4" height="7" viewBox="0 0 4 7"><path d="M0.2 2.6h3.6l-1.8-2.3zM0.2 4.4h3.6l-1.8 2.3z" fill="#ececec"/></svg>
<div class="t" style="left:723.4px;top:122px;font-size:8.3px;color:#e4e4e4;transform:scale(0.985,1);transform-origin:0 0;">不透明度:</div>
<div class="a" style="left:762px;top:120px;width:25.2px;height:12.4px;background:#333;border-top:1px solid #2a2a2a"></div>
<div class="t" style="left:765px;top:121.6px;font-size:8.3px;color:#ececec;transform:scale(0.9,1);transform-origin:0 0;">100%</div>
<div class="a" style="left:787.2px;top:120px;width:12.8px;height:12.4px;background:linear-gradient(#6e6e6e,#5c5c5c);border-left:1px solid #3c3c3c"></div>
<svg style="left:791.6px;top:125.6px;" width="4" height="3" viewBox="0 0 4 3"><path d="M0.2 0.3h3.6l-1.8 2.4z" fill="#eee"/></svg>
<div class="a" style="left:639px;top:135.6px;width:161px;height:1px;background:#474747"></div>
<div class="t" style="left:643px;top:140.2px;font-size:8.3px;color:#e4e4e4;">锁定:</div>
<svg style="left:668.4px;top:142px;" width="8.4" height="8.4" viewBox="0 0 8.4 8.4"><rect x="0" y="0" width="8.4" height="8.4" fill="#6a6a6a"/><rect x="0.8" y="0.8" width="3.4" height="3.4" fill="#999"/><rect x="4.2" y="4.2" width="3.4" height="3.4" fill="#999"/><rect x="0.4" y="0.4" width="7.6" height="7.6" fill="none" stroke="#8a8a8a" stroke-width="0.8"/></svg>
<svg style="left:683px;top:140.6px;" width="12" height="11" viewBox="0 0 12 11"><path d="M11.2 0.6L6 6.2" stroke="#c8c8c8" stroke-width="1.3" stroke-linecap="round"/><path d="M6.6 5L7.8 6.4Q6.4 9.6 0.6 10.2Q3.6 8.2 3.8 6.2Q5 4.8 6.6 5Z" fill="#b4b4b4"/></svg>
<svg style="left:698.4px;top:141px;" width="10" height="10" viewBox="0 0 10 10"><path d="M5 0L6.8 2.2H5.6V4.4H7.8V3.2L10 5L7.8 6.8V5.6H5.6V7.8H6.8L5 10L3.2 7.8H4.4V5.6H2.2V6.8L0 5L2.2 3.2V4.4H4.4V2.2H3.2Z" fill="#e4e4e4"/></svg>
<svg style="left:714.4px;top:140.6px;" width="8" height="10" viewBox="0 0 8 10"><path d="M2 4.4V2.8A2 2 0 0 1 6 2.8V4.4" fill="none" stroke="#e4e4e4" stroke-width="1.2"/><rect x="0.4" y="4.2" width="7.2" height="5.4" fill="#e4e4e4"/><rect x="3.4" y="5.8" width="1.2" height="2.2" fill="#555"/></svg>
<div class="t" style="left:740.4px;top:140.2px;font-size:8.3px;color:#e4e4e4;">填充:</div>
<div class="a" style="left:762px;top:138.8px;width:25.2px;height:12.4px;background:#333;border-top:1px solid #2a2a2a"></div>
<div class="t" style="left:765px;top:140.4px;font-size:8.3px;color:#ececec;transform:scale(0.9,1);transform-origin:0 0;">100%</div>
<div class="a" style="left:787.2px;top:138.8px;width:12.8px;height:12.4px;background:linear-gradient(#6e6e6e,#5c5c5c);border-left:1px solid #3c3c3c"></div>
<svg style="left:791.6px;top:144.4px;" width="4" height="3" viewBox="0 0 4 3"><path d="M0.2 0.3h3.6l-1.8 2.4z" fill="#eee"/></svg>
<div class="a" style="left:639px;top:156px;width:155px;height:258px;background:#454545"></div>
<div class="a" style="left:794px;top:156px;width:6px;height:258px;background:#4d4d4d;border-left:1px solid #3e3e3e"></div>
<div class="a" style="left:639px;top:156px;width:155px;height:81.6px;background:#535353"></div>
<div class="a" style="left:660.2px;top:182.6px;width:133.8px;height:26.8px;background:#6b7d98;border-top:0.8px solid #8391a8;border-bottom:0.8px solid #7b8aa3"></div>
<div class="a" style="left:639px;top:155.5px;width:155px;height:1px;background:#3d3d3d"></div>
<div class="a" style="left:639px;top:181.9px;width:155px;height:1px;background:#3d3d3d"></div>
<div class="a" style="left:639px;top:209.1px;width:155px;height:1px;background:#3d3d3d"></div>
<div class="a" style="left:639px;top:236.7px;width:155px;height:1px;background:#3d3d3d"></div>
<div class="a" style="left:659.4px;top:156px;width:1px;height:81.5px;background:#3d3d3d"></div>
<svg style="left:644px;top:166.20000000000002px;" width="9.6" height="7.2" viewBox="0 0 9.6 7.2"><path d="M0.3 3.6Q4.8 -1.4 9.3 3.6Q4.8 8.4 0.3 3.6Z" fill="#e6e6e6"/><circle cx="4.8" cy="3.4" r="1.9" fill="#3c3c3c"/><circle cx="4.2" cy="2.8" r="0.7" fill="#e6e6e6"/></svg>
<svg style="left:644px;top:192.8px;" width="9.6" height="7.2" viewBox="0 0 9.6 7.2"><path d="M0.3 3.6Q4.8 -1.4 9.3 3.6Q4.8 8.4 0.3 3.6Z" fill="#e6e6e6"/><circle cx="4.8" cy="3.4" r="1.9" fill="#3c3c3c"/><circle cx="4.2" cy="2.8" r="0.7" fill="#e6e6e6"/></svg>
<svg style="left:644px;top:219.6px;" width="9.6" height="7.2" viewBox="0 0 9.6 7.2"><path d="M0.3 3.6Q4.8 -1.4 9.3 3.6Q4.8 8.4 0.3 3.6Z" fill="#e6e6e6"/><circle cx="4.8" cy="3.4" r="1.9" fill="#3c3c3c"/><circle cx="4.2" cy="2.8" r="0.7" fill="#e6e6e6"/></svg>
<svg style="left:666px;top:167.6px;" width="5" height="6" viewBox="0 0 5 6"><path d="M3.8 0.4V3.6H1.2" fill="none" stroke="#e0e0e0" stroke-width="0.9"/><path d="M2.2 1.8L0.2 3.6L2.2 5.4Z" fill="#e0e0e0"/></svg>
<div class="a" style="left:672.2px;top:158px;width:22.8px;height:22.6px;background:#111;border-radius:1px"></div>
<div id="thumbwood" class="a" style="left:673.2px;top:159px;width:20.8px;height:20.6px;background:linear-gradient(90deg,#ead7a4,#e4cf9a 30%,#eddcae 55%,#e6d19d 80%,#e9d6a3)"></div>
<div class="a" style="left:686.4px;top:170.4px;width:8.8px;height:10.6px;background:#111"></div>
<div class="a" style="left:687.4px;top:171.4px;width:8px;height:10px;background:#535353"></div>
<svg style="left:688px;top:171.8px;" width="7" height="9" viewBox="0 0 7 9"><path d="M0.6 0.4H4.4L6.2 2.2V7H3.2V8.6H0.6Z" fill="#ececec"/><rect x="0.2" y="5.6" width="2.8" height="3" fill="#fff" stroke="#222" stroke-width="0.6"/><path d="M3 2.4h2v2.4" stroke="#333" stroke-width="0.7" fill="none"/></svg>
<div class="t" style="left:701.4px;top:165.6px;font-size:8.3px;color:#e6e6e6;">木纹</div>
<div class="a" style="left:660.6px;top:183.8px;width:24.4px;height:24.6px;border:1px solid #f0f0f0;background:transparent"></div>
<div class="a" style="left:663.4px;top:183.4px;width:18.8px;height:25.4px;background:#6b7d98"></div>
<div class="a" style="left:660.2px;top:186.6px;width:25.2px;height:19px;background:#6b7d98"></div>
<div class="a" style="left:661.8px;top:184.8px;width:22.2px;height:22.6px;background:#111"></div>
<div class="a" style="left:662.8px;top:185.8px;width:20.2px;height:20.6px;background:#fff;background-image:linear-gradient(45deg,#d4d4d4 25%,transparent 25%,transparent 75%,#d4d4d4 75%),linear-gradient(45deg,#d4d4d4 25%,transparent 25%,transparent 75%,#d4d4d4 75%);background-size:5.6px 5.6px;background-position:0 0,2.8px 2.8px"></div>
<svg style="left:662.8px;top:185.8px;" width="20.2" height="20.6" viewBox="0 0 20.2 20.6"><path d="M3.6 3.6H16.6V17H3.6Z" fill="#fff"/></svg>
<div class="a" style="left:673.6px;top:197.6px;width:11.6px;height:10.8px;background:#111"></div>
<div class="a" style="left:674.6px;top:198.6px;width:10.8px;height:10px;background:#6b7d98"></div>
<svg style="left:676px;top:199.6px;" width="8.4" height="8" viewBox="0 0 8.4 8"><rect x="1.4" y="1.4" width="5.6" height="5.2" fill="none" stroke="#c9d3e0" stroke-width="0.9"/><rect x="0" y="0" width="2.2" height="2.2" fill="#c9d3e0"/><rect x="6.2" y="0" width="2.2" height="2.2" fill="#c9d3e0"/><rect x="0" y="5.8" width="2.2" height="2.2" fill="#c9d3e0"/><rect x="6.2" y="5.8" width="2.2" height="2.2" fill="#c9d3e0"/></svg>
<div class="t" style="left:689.8px;top:192px;font-size:8.3px;color:#fff;transform:scale(1.06,1);transform-origin:0 0;text-decoration:underline;text-underline-offset:0.2px;text-decoration-thickness:0.8px;">圆角矩形 1</div>
<div class="a" style="left:662.2px;top:212.2px;width:21.8px;height:21.4px;background:#7b7777;border:1px solid #1c1c1c"></div>
<div class="t" style="left:691.2px;top:218.8px;font-size:8.3px;color:#e6e6e6;font-style:italic;">背景</div>
<svg style="left:774.2px;top:218px;" width="8" height="10" viewBox="0 0 8 10"><path d="M2 4.4V2.8A2 2 0 0 1 6 2.8V4.4" fill="none" stroke="#e4e4e4" stroke-width="1"/><rect x="0.6" y="4.4" width="6.8" height="5" fill="none" stroke="#e4e4e4" stroke-width="1"/><rect x="3.4" y="6" width="1.2" height="1.8" fill="#e4e4e4"/></svg>
<div class="a" style="left:639px;top:413.4px;width:161px;height:1.2px;background:#383838"></div>
<div class="a" style="left:639px;top:414.6px;width:161px;height:13px;background:#4c4c4c"></div>
<svg style="left:664px;top:418.6px;" width="10.6" height="6.4" viewBox="0 0 10.6 6.4"><path d="M4 1H3.2a2.2 2.2 0 0 0 0 4.4H4M6.6 1h0.8a2.2 2.2 0 0 1 0 4.4H6.6M3.4 3.2h3.8" fill="none" stroke="#9c9c9c" stroke-width="1.1" stroke-linecap="round"/></svg>
<div class="t" style="left:683.6px;top:416.2px;font-size:10.5px;color:#e6e6e6;font-style:italic;line-height:11px;height:11px;letter-spacing:-0.4px;">fx</div>
<svg style="left:692.4px;top:424px;" width="2.4" height="1.6" viewBox="0 0 2.4 1.6"><path d="M0 0h2.4l-1.2 1.5z" fill="#ddd"/></svg>
<div class="a" style="left:702px;top:417.4px;width:9.8px;height:7.8px;background:#e0e0e0"></div>
<svg style="left:704.4px;top:418.8px;" width="5" height="5" viewBox="0 0 5 5"><circle cx="2.5" cy="2.5" r="2.2" fill="#404040"/></svg>
<svg style="left:721.4px;top:417.2px;" width="8.4" height="8.4" viewBox="0 0 8.4 8.4"><circle cx="4.2" cy="4.2" r="3.8" fill="#dadada"/><path d="M2.6 6.4L6.4 2.6" stroke="#4e4e4e" stroke-width="1.7" stroke-linecap="round"/></svg>
<svg style="left:730.4px;top:424px;" width="2.4" height="1.6" viewBox="0 0 2.4 1.6"><path d="M0 0h2.4l-1.2 1.5z" fill="#ddd"/></svg>
<svg style="left:738.6px;top:417.4px;" width="9.6" height="8" viewBox="0 0 9.6 8"><path d="M0.2 0.8H3.6L4.6 2H9.4V7.8H0.2Z" fill="#dcdcdc"/></svg>
<svg style="left:757.6px;top:417px;" width="9.4" height="8.6" viewBox="0 0 9.4 8.6"><path d="M1.6 0.4H9V7.8H4.2L1.6 5.2Z" fill="#dcdcdc"/><path d="M0.4 4.4H4.8V8.4H0.4Z" fill="#4c4c4c"/><path d="M1 5H4.2V7.8" fill="none" stroke="#dcdcdc" stroke-width="0.8"/></svg>
<svg style="left:776.2px;top:416.6px;" width="8.4" height="9.4" viewBox="0 0 8.4 9.4"><rect x="0.2" y="1.6" width="8" height="1.3" fill="#dcdcdc"/><rect x="2.8" y="0.3" width="2.8" height="1.4" fill="#dcdcdc"/><path d="M1 3.6H7.4L6.8 9.2H1.6Z" fill="#dcdcdc"/><path d="M3 4.6V8.2M4.2 4.6V8.2M5.4 4.6V8.2" stroke="#555" stroke-width="0.5"/></svg>
<div class="a" style="left:639px;top:427.6px;width:161px;height:2px;background:#333"></div>
<div class="a" style="left:639px;top:429.6px;width:161px;height:11.2px;background:#3a3a3a"></div>
<div class="a" style="left:639px;top:429.6px;width:40.8px;height:11.4px;background:#535353"></div>
<div class="t" style="left:643.6px;top:430.6px;font-size:8.3px;color:#e6e6e6;transform:scale(0.95,1);transform-origin:0 0;">历史记录</div>
<svg style="left:792.6px;top:433.6px;" width="9.2" height="5" viewBox="0 0 9.2 5"><path d="M0 1.2h3.2l-1.6 2z" fill="#e0e0e0"/><rect x="4.2" y="0" width="5" height="5" fill="#8a8a8a"/></svg>
<div class="a" style="left:793px;top:441px;width:7px;height:192px;background:#4b4b4b;border-left:1.6px solid #3c3c3c"></div>
<svg style="left:642.6px;top:449.4px;" width="10" height="9" viewBox="0 0 10 9"><path d="M9.6 0.4L4.8 4.4L5.8 5.6Z" fill="#e6e6e6"/><path d="M5 4Q2.6 3.8 1.8 6L0.2 7.6Q3.8 8.6 6 5.4Z" fill="#e6e6e6"/><path d="M0.6 3.4Q3 0.6 6.4 0.8" stroke="#e6e6e6" stroke-width="1" fill="none"/></svg>
<div class="a" style="left:655.8px;top:443.4px;width:21.8px;height:21.8px;background:#fff;border:1px solid #222"></div>
<div class="t" style="left:681.8px;top:449.4px;font-size:8.3px;color:#e6e6e6;">未标题-1</div>
<div class="a" style="left:639px;top:469.1px;width:154px;height:1.2px;background:#3a3a3a"></div>
<div class="a" style="left:639px;top:485.54px;width:154px;height:1px;background:#3f3f3f"></div>
<div class="a" style="left:642.2px;top:474.1px;width:8.4px;height:8.2px;background:#484848;border:1px solid #3c3c3c;border-bottom-color:#5e5e5e;border-right-color:#5a5a5a"></div>
<svg style="left:660px;top:473.5px;" width="9.6" height="9.6" viewBox="0 0 9.6 9.6"><path d="M0.4 0.4H6.6L9.2 2.6V9.2H0.4Z" fill="#8a8a8a" stroke="#dedede" stroke-width="0.8"/><path d="M1.6 4H8M1.6 5.6H8M1.6 7.2H8" stroke="#c8c8c8" stroke-width="0.7"/><path d="M6.4 0.4V2.8H9.2" fill="none" stroke="#dedede" stroke-width="0.7"/></svg>
<div class="t" style="left:679px;top:472.90000000000003px;font-size:8.3px;color:#ececec;transform:scale(0.985,1);transform-origin:0 0;">新建</div>
<div class="a" style="left:639px;top:501.28000000000003px;width:154px;height:1px;background:#3f3f3f"></div>
<div class="a" style="left:642.2px;top:489.84000000000003px;width:8.4px;height:8.2px;background:#484848;border:1px solid #3c3c3c;border-bottom-color:#5e5e5e;border-right-color:#5a5a5a"></div>
<svg style="left:660px;top:489.44px;" width="9.6" height="9.2" viewBox="0 0 9.6 9.2"><rect x="0.4" y="0.4" width="8.8" height="8.4" fill="#555" stroke="#d8d8d8" stroke-width="0.8"/><rect x="0.8" y="0.8" width="8" height="1.8" fill="#d8d8d8"/><rect x="1.8" y="4" width="1.4" height="1.2" fill="#d8d8d8"/><rect x="4" y="4" width="4" height="1.2" fill="#d8d8d8"/><rect x="1.8" y="6.2" width="1.4" height="1.2" fill="#d8d8d8"/><rect x="4" y="6.2" width="4" height="1.2" fill="#d8d8d8"/></svg>
<div class="t" style="left:679px;top:488.64000000000004px;font-size:8.3px;color:#ececec;transform:scale(0.985,1);transform-origin:0 0;">填充</div>
<div class="a" style="left:639px;top:517.02px;width:154px;height:1px;background:#3f3f3f"></div>
<div class="a" style="left:642.2px;top:505.58000000000004px;width:8.4px;height:8.2px;background:#484848;border:1px solid #3c3c3c;border-bottom-color:#5e5e5e;border-right-color:#5a5a5a"></div>
<svg style="left:660px;top:504.98px;" width="9.6" height="9.6" viewBox="0 0 9.6 9.6"><path d="M0.4 0.4H6.6L9.2 2.6V9.2H0.4Z" fill="#8a8a8a" stroke="#dedede" stroke-width="0.8"/><path d="M1.6 4H8M1.6 5.6H8M1.6 7.2H8" stroke="#c8c8c8" stroke-width="0.7"/><path d="M6.4 0.4V2.8H9.2" fill="none" stroke="#dedede" stroke-width="0.7"/></svg>
<div class="t" style="left:679px;top:504.38000000000005px;font-size:8.3px;color:#ececec;transform:scale(0.985,1);transform-origin:0 0;">新建图层</div>
<div class="a" style="left:639px;top:532.76px;width:154px;height:1px;background:#3f3f3f"></div>
<div class="a" style="left:642.2px;top:521.3199999999999px;width:8.4px;height:8.2px;background:#484848;border:1px solid #3c3c3c;border-bottom-color:#5e5e5e;border-right-color:#5a5a5a"></div>
<svg style="left:660px;top:520.72px;" width="9.6" height="9.6" viewBox="0 0 9.6 9.6"><path d="M0.4 0.4H6.6L9.2 2.6V9.2H0.4Z" fill="#8a8a8a" stroke="#dedede" stroke-width="0.8"/><path d="M1.6 4H8M1.6 5.6H8M1.6 7.2H8" stroke="#c8c8c8" stroke-width="0.7"/><path d="M6.4 0.4V2.8H9.2" fill="none" stroke="#dedede" stroke-width="0.7"/></svg>
<div class="t" style="left:679px;top:520.12px;font-size:8.3px;color:#ececec;transform:scale(0.985,1);transform-origin:0 0;">圆角矩形工具</div>
<div class="a" style="left:639px;top:548.5px;width:154px;height:1px;background:#3f3f3f"></div>
<div class="a" style="left:642.2px;top:537.06px;width:8.4px;height:8.2px;background:#484848;border:1px solid #3c3c3c;border-bottom-color:#5e5e5e;border-right-color:#5a5a5a"></div>
<svg style="left:660px;top:536.46px;" width="9.6" height="9.6" viewBox="0 0 9.6 9.6"><path d="M0.4 0.4H6.6L9.2 2.6V9.2H0.4Z" fill="#8a8a8a" stroke="#dedede" stroke-width="0.8"/><path d="M1.6 4H8M1.6 5.6H8M1.6 7.2H8" stroke="#c8c8c8" stroke-width="0.7"/><path d="M6.4 0.4V2.8H9.2" fill="none" stroke="#dedede" stroke-width="0.7"/></svg>
<div class="t" style="left:679px;top:535.86px;font-size:8.3px;color:#ececec;transform:scale(0.985,1);transform-origin:0 0;">水平居中对齐</div>
<div class="a" style="left:639px;top:564.24px;width:154px;height:1px;background:#3f3f3f"></div>
<div class="a" style="left:642.2px;top:552.8px;width:8.4px;height:8.2px;background:#484848;border:1px solid #3c3c3c;border-bottom-color:#5e5e5e;border-right-color:#5a5a5a"></div>
<svg style="left:660px;top:552.2px;" width="9.6" height="9.6" viewBox="0 0 9.6 9.6"><path d="M0.4 0.4H6.6L9.2 2.6V9.2H0.4Z" fill="#8a8a8a" stroke="#dedede" stroke-width="0.8"/><path d="M1.6 4H8M1.6 5.6H8M1.6 7.2H8" stroke="#c8c8c8" stroke-width="0.7"/><path d="M6.4 0.4V2.8H9.2" fill="none" stroke="#dedede" stroke-width="0.7"/></svg>
<div class="t" style="left:679px;top:551.6px;font-size:8.3px;color:#ececec;transform:scale(0.985,1);transform-origin:0 0;">垂直居中对齐</div>
<div class="a" style="left:639px;top:579.98px;width:154px;height:1px;background:#3f3f3f"></div>
<div class="a" style="left:642.2px;top:568.54px;width:8.4px;height:8.2px;background:#484848;border:1px solid #3c3c3c;border-bottom-color:#5e5e5e;border-right-color:#5a5a5a"></div>
<svg style="left:660px;top:567.94px;" width="9.6" height="9.6" viewBox="0 0 9.6 9.6"><path d="M0.4 0.4H6.6L9.2 2.6V9.2H0.4Z" fill="#8a8a8a" stroke="#dedede" stroke-width="0.8"/><path d="M1.6 4H8M1.6 5.6H8M1.6 7.2H8" stroke="#c8c8c8" stroke-width="0.7"/><path d="M6.4 0.4V2.8H9.2" fill="none" stroke="#dedede" stroke-width="0.7"/></svg>
<div class="t" style="left:679px;top:567.34px;font-size:8.3px;color:#ececec;transform:scale(0.985,1);transform-origin:0 0;">填充图层</div>
<div class="a" style="left:639px;top:595.72px;width:154px;height:1px;background:#3f3f3f"></div>
<div class="a" style="left:642.2px;top:584.28px;width:8.4px;height:8.2px;background:#484848;border:1px solid #3c3c3c;border-bottom-color:#5e5e5e;border-right-color:#5a5a5a"></div>
<svg style="left:660px;top:583.6800000000001px;" width="9.6" height="9.6" viewBox="0 0 9.6 9.6"><path d="M0.4 0.4H6.6L9.2 2.6V9.2H0.4Z" fill="#8a8a8a" stroke="#dedede" stroke-width="0.8"/><path d="M1.6 4H8M1.6 5.6H8M1.6 7.2H8" stroke="#c8c8c8" stroke-width="0.7"/><path d="M6.4 0.4V2.8H9.2" fill="none" stroke="#dedede" stroke-width="0.7"/></svg>
<div class="t" style="left:679px;top:583.08px;font-size:8.3px;color:#ececec;transform:scale(0.985,1);transform-origin:0 0;">置入嵌入的智能对象</div>
<div class="a" style="left:639px;top:611.46px;width:154px;height:1px;background:#3f3f3f"></div>
<div class="a" style="left:642.2px;top:600.02px;width:8.4px;height:8.2px;background:#484848;border:1px solid #3c3c3c;border-bottom-color:#5e5e5e;border-right-color:#5a5a5a"></div>
<svg style="left:660px;top:599.4200000000001px;" width="9.6" height="9.6" viewBox="0 0 9.6 9.6"><path d="M0.4 0.4H6.6L9.2 2.6V9.2H0.4Z" fill="#8a8a8a" stroke="#dedede" stroke-width="0.8"/><path d="M1.6 4H8M1.6 5.6H8M1.6 7.2H8" stroke="#c8c8c8" stroke-width="0.7"/><path d="M6.4 0.4V2.8H9.2" fill="none" stroke="#dedede" stroke-width="0.7"/></svg>
<div class="t" style="left:679px;top:598.82px;font-size:8.3px;color:#ececec;transform:scale(0.985,1);transform-origin:0 0;">创建剪贴蒙版</div>
<div class="a" style="left:639px;top:611.96px;width:154px;height:15.74px;background:#6b7d98"></div>
<div class="a" style="left:639px;top:627.2px;width:154px;height:1px;background:#3f3f3f"></div>
<div class="a" style="left:642.2px;top:615.76px;width:8.4px;height:8.2px;background:#63758f;border:1px solid #526279;border-bottom-color:#8796ad;border-right-color:#8796ad"></div>
<svg style="left:660px;top:615.1600000000001px;" width="9.6" height="9.6" viewBox="0 0 9.6 9.6"><path d="M0.4 0.4H6.6L9.2 2.6V9.2H0.4Z" fill="#8a8a8a" stroke="#dedede" stroke-width="0.8"/><path d="M1.6 4H8M1.6 5.6H8M1.6 7.2H8" stroke="#c8c8c8" stroke-width="0.7"/><path d="M6.4 0.4V2.8H9.2" fill="none" stroke="#dedede" stroke-width="0.7"/></svg>
<div class="t" style="left:679px;top:614.5600000000001px;font-size:8.3px;color:#fff;transform:scale(0.985,1);transform-origin:0 0;">名称更改</div>
<div class="a" style="left:639px;top:627.7px;width:154px;height:6px;background:#424242"></div>
</div>
</body>
</html>
